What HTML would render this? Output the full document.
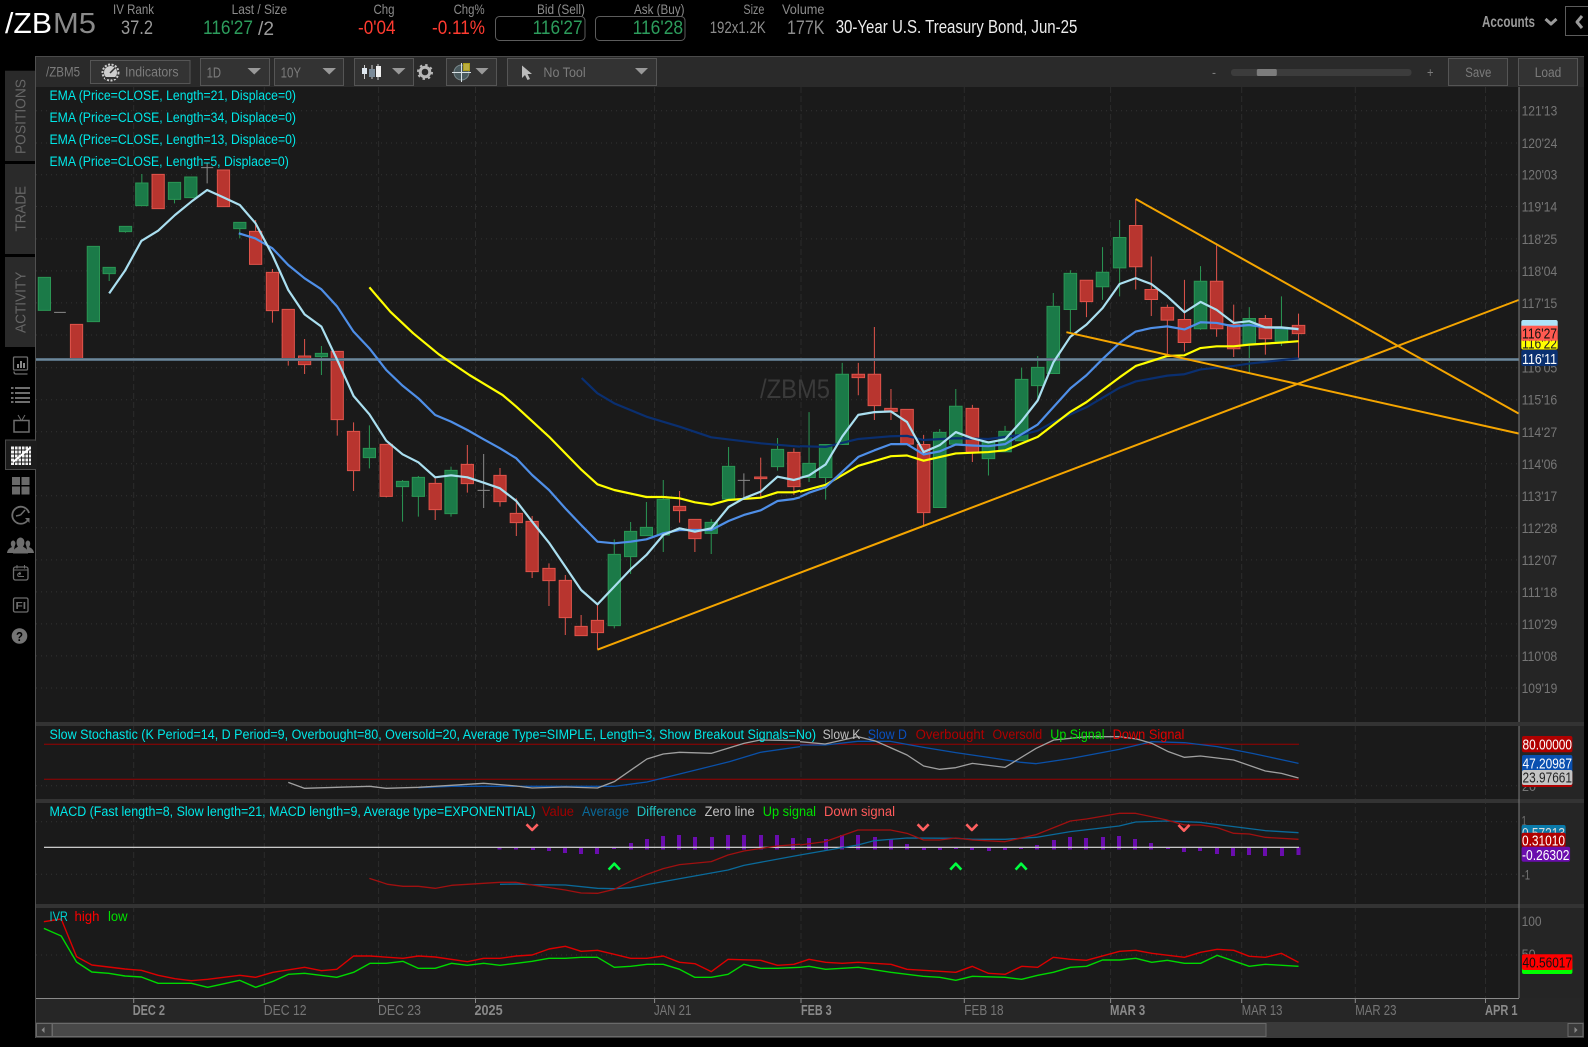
<!DOCTYPE html>
<html><head><meta charset="utf-8"><title>/ZBM5</title>
<style>
html,body{margin:0;padding:0;background:#000;width:1588px;height:1047px;overflow:hidden}
svg{display:block}
text{font-family:"Liberation Sans",sans-serif;white-space:pre}
path,polyline,line{vector-effect:non-scaling-stroke}
.l{fill:none;stroke-linejoin:round}
.rb{fill:#b8352f;stroke:#e0544b;stroke-width:1}
.gb{fill:#1b7a48;stroke:#2a9654;stroke-width:1}
.rw{fill:none;stroke:#e0544b;stroke-width:1}
.gw{fill:none;stroke:#2a9654;stroke-width:1}
.dw{fill:none;stroke:#8a8a8a;stroke-width:1}
.hd{font-size:14px;fill:#8c8c8c}
.big{font-size:19.5px}
.ax{font-size:14px;fill:#767676}
.tb{font-size:13.5px;fill:#7c7c7c}
.em{font-size:13.5px;fill:#00e8e8}
.tm{font-size:14.5px;fill:#767676}
.tmb{font-size:14.5px;fill:#8a8a8a;font-weight:bold}
.btn{fill:#333;stroke:#555;stroke-width:1}
.tri{fill:#999}
.val{font-size:14.5px}
.tab{font-size:15px;fill:#666}
</style></head>
<body>
<svg width="1588" height="1047" viewBox="0 0 1588 1047" xmlns="http://www.w3.org/2000/svg">
<rect width="1588" height="1047" fill="#000"/>

<!-- header -->
<text x="5" y="33" font-size="29" fill="#fff" textLength="47" lengthAdjust="spacingAndGlyphs">/ZB</text>
<text x="53" y="33" font-size="29" fill="#8a8a8a" textLength="43" lengthAdjust="spacingAndGlyphs">M5</text>
<text class="hd" x="113" y="14" textLength="41" lengthAdjust="spacingAndGlyphs">IV Rank</text>
<text class="big" x="121" y="34" fill="#9a9a9a" textLength="32" lengthAdjust="spacingAndGlyphs">37.2</text>
<text class="hd" x="231.6" y="14" textLength="55.5" lengthAdjust="spacingAndGlyphs">Last / Size</text>
<text class="big" x="203" y="34" fill="#2c9c5c" textLength="50" lengthAdjust="spacingAndGlyphs">116'27</text>
<text class="big" x="258" y="35" fill="#9a9a9a" textLength="16" lengthAdjust="spacingAndGlyphs">/2</text>
<text class="hd" x="373.5" y="14" textLength="21" lengthAdjust="spacingAndGlyphs">Chg</text>
<text class="big" x="358" y="34" fill="#ff3b30" textLength="37.5" lengthAdjust="spacingAndGlyphs">-0'04</text>
<text class="hd" x="453.6" y="14" textLength="31" lengthAdjust="spacingAndGlyphs">Chg%</text>
<text class="big" x="432" y="34" fill="#ff3b30" textLength="53" lengthAdjust="spacingAndGlyphs">-0.11%</text>
<text class="hd" x="537" y="14" textLength="48" lengthAdjust="spacingAndGlyphs">Bid (Sell)</text>
<rect x="495.5" y="16.5" width="89.5" height="24" rx="4" fill="none" stroke="#5c5c5c"/>
<text class="big" x="532.6" y="34" fill="#2c9c5c" textLength="50" lengthAdjust="spacingAndGlyphs">116'27</text>
<text class="hd" x="634" y="14" textLength="50.5" lengthAdjust="spacingAndGlyphs">Ask (Buy)</text>
<rect x="595.5" y="16.5" width="89.5" height="24" rx="4" fill="none" stroke="#5c5c5c"/>
<text class="big" x="632.6" y="34" fill="#2c9c5c" textLength="50.5" lengthAdjust="spacingAndGlyphs">116'28</text>
<text class="hd" x="743.4" y="14" textLength="21" lengthAdjust="spacingAndGlyphs">Size</text>
<text x="709.7" y="33" font-size="16.5" fill="#8c8c8c" textLength="56" lengthAdjust="spacingAndGlyphs">192x1.2K</text>
<text class="hd" x="782" y="14" textLength="42.5" lengthAdjust="spacingAndGlyphs">Volume</text>
<text class="big" x="787" y="34" fill="#8c8c8c" textLength="37.5" lengthAdjust="spacingAndGlyphs">177K</text>
<text x="835.7" y="33" font-size="18.5" fill="#ececec" textLength="241.7" lengthAdjust="spacingAndGlyphs">30-Year U.S. Treasury Bond, Jun-25</text>
<text x="1482" y="27" font-size="15.5" font-weight="bold" fill="#9a9a9a" textLength="53" lengthAdjust="spacingAndGlyphs">Accounts</text>
<polyline class="l" points="1545.5,19 1551,24 1556.5,19" stroke="#9a9a9a" stroke-width="3"/>
<path d="M1588 6.5H1565.5V35.5H1588" fill="none" stroke="#5c5c5c"/>
<polyline class="l" points="1582,16 1577,22 1582,28" stroke="#9a9a9a" stroke-width="3"/>

<!-- panel bg -->
<rect x="36" y="56" width="1548" height="982" fill="#2a2a2a"/>
<rect x="36" y="56" width="1548" height="1" fill="#4a4a4a"/>
<rect x="36" y="87" width="1483" height="911" fill="#1a1a1a"/>
<rect x="1519" y="87" width="65" height="911" fill="#252525"/>
<rect x="35" y="56" width="1" height="982" fill="#505050"/>

<!-- grid verticals -->
<path d="M133.7 87V998M264.3 87V998M378.6 87V998M475.5 87V998M654.6 87V998M801 87V998M964.3 87V998M1110.6 87V998M1241.7 87V998M1355.3 87V998M1485.5 87V998" fill="none" stroke="#2b2b2b" stroke-dasharray="6 3"/>
<!-- grid horizontals -->
<path d="M36 110.7H1519M36 143H1519M36 174.7H1519M36 206.5H1519M36 238.9H1519M36 270.9H1519M36 302.9H1519M36 335H1519M36 367.7H1519M36 399.7H1519M36 431.8H1519M36 463.8H1519M36 495.8H1519M36 527.8H1519M36 559.9H1519M36 591.9H1519M36 623.9H1519M36 655.9H1519M36 688H1519M36 785.7H1519M36 821.7H1519M36 874.3H1519M36 955H1519" fill="none" stroke="#333" stroke-dasharray="1 4"/>

<!-- candles left -->
<g transform="translate(0,200) scale(.5102,.33333)">
<path class="rw" d="M501 60V193M534 207V368M565 328V497M597 417V522M661 454V707M693 667V873M757 733V892M853 835V960M916 735V878M980 804V920M1012 895V1008M1043 948V1134M1076 1090V1218M1108 1125V1305M1139 1245V1307M1171 1215V1348M1332 873V968M1362 958V1056M1491 773V890M1556 745V885"/>
<path class="gw" d="M214 202V243M246 79V98M278 -78V17M342 -53V10M470 67V115M630 438V525M724 676V805M789 840V965M820 828V950M884 800V950M1204 1018V1285M1236 966V1122M1267 906V1007M1300 840V1056M1394 957V1062M1428 741V897M1524 714V812"/>
<path class="dw" d="M106 337H129M406 -110V-50M394 -97H418M948 762V924M936 871H960M1458 820V895M1446 841H1470"/>
<path class="rb" d="M138 373h24v106h-24zM298 -77h24v103h-24zM426 -90h24v110h-24zM489 94h24v99h-24zM522 217h24v115h-24zM553 328h24v153h-24zM585 468h24v26h-24zM649 454h24v205h-24zM681 694h24v118h-24zM745 733h24v156h-24zM841 850h24v79h-24zM904 793h24v58h-24zM968 826h24v79h-24zM1000 940h24v28h-24zM1031 964h24v151h-24zM1064 1105h24v37h-24zM1096 1141h24v112h-24zM1127 1279h24v28h-24zM1159 1261h24v37h-24zM1320 919h24v13h-24zM1350 958h24v58h-24zM1479 831h24v5h-24zM1544 757h24v103h-24z"/>
<path class="gb" d="M75 232h24v99h-24zM171 139h24v226h-24zM202 202h24v19h-24zM234 79h24v16h-24zM266 -51h24v68h-24zM330 -53h24v51h-24zM362 -69h24v62h-24zM458 67h24v19h-24zM618 460h24v10h-24zM712 745h24v28h-24zM777 844h24v16h-24zM808 832h24v57h-24zM872 811h24v130h-24zM1192 1063h24v214h-24zM1224 994h24v76h-24zM1255 982h24v25h-24zM1288 898h24v107h-24zM1382 967h24v33h-24zM1416 799h24v98h-24zM1512 748h24v52h-24z"/>
</g>
<!-- candles right -->
<g transform="translate(800,180) scale(.50255,.34438)">
<path class="rw" d="M116 531V625M148 427V697M181 607V697M213 666V767M246 740V1003M343 653V819M570 291V398M668 55V318M699 222V395M731 362V510M765 290V498M829 190V455M863 362V514M926 392V507M992 388V520"/>
<path class="gw" d="M18 674V877M51 768V928M84 531V768M278 723V951M310 607V767M375 760V858M408 714V789M441 545V757M473 511V640M504 328V562M538 262V445M602 195V348M636 116V338M797 250V435M894 369V560M958 338V482"/>
<path class="rb" d="M103.5 564h25v10h-25zM135.5 564h25v91h-25zM168.5 663h25v9h-25zM200.5 666h25v101h-25zM233.5 768h25v198h-25zM330.5 663h25v127h-25zM557.5 291h25v62h-25zM655.5 132h25v120h-25zM686.5 318h25v29h-25zM718.5 370h25v37h-25zM752.5 405h25v67h-25zM816.5 294h25v138h-25zM850.5 420h25v70h-25zM913.5 402h25v59h-25zM979.5 422h25v24h-25z"/>
<path class="gb" d="M5.5 823h25v41h-25zM38.5 768h25v96h-25zM71.5 564h25v204h-25zM265.5 733h25v218h-25zM297.5 657h25v110h-25zM362.5 760h25v49h-25zM395.5 730h25v59h-25zM428.5 579h25v178h-25zM460.5 544h25v53h-25zM491.5 367h25v195h-25zM525.5 271h25v105h-25zM589.5 268h25v42h-25zM623.5 167h25v88h-25zM784.5 294h25v138h-25zM881.5 402h25v75h-25zM945.5 430h25v38h-25z"/>
</g>

<!-- support line -->
<rect x="36" y="358" width="1483" height="3" fill="#566e80"/>
<rect x="36" y="359" width="1483" height="1" fill="#6f8899"/>

<!-- watermark -->
<text x="760" y="398" font-size="27" fill="#3a3a3a" textLength="70" lengthAdjust="spacingAndGlyphs">/ZBM5</text>

<!-- EMAs left -->
<g transform="translate(0,200) scale(.5102,.33333)" stroke-width="2.2">
<polyline class="l" stroke="#0a2f70" points="1140,534 1171,580 1204,610 1267,650 1332,680 1394,712 1491,730 1568,740"/>
<polyline class="l" stroke="#ffff00" points="724,262 765,335 810,400 860,463 920,525 985,585 1012,620 1076,710 1140,810 1171,853 1204,870 1267,891 1300,891 1332,895 1362,907 1394,914 1428,900 1491,893 1524,877 1556,877 1568,872"/>
<polyline class="l" stroke="#4f8fe8" points="468,100 500,115 534,145 565,195 597,235 630,268 661,320 693,395 724,445 757,510 789,557 820,595 853,645 884,665 916,690 948,718 980,745 1012,775 1043,825 1076,870 1108,925 1139,975 1171,1025 1204,1030 1236,1025 1267,1018 1300,1000 1332,990 1362,990 1394,990 1428,963 1458,945 1491,931 1524,903 1556,897 1568,892"/>
<polyline class="l" stroke="#aadff0" points="214,280 245,212 277,123 310,92 343,45 375,5 406,-30 438,-8 470,15 501,70 534,165 565,270 597,343 630,380 661,480 693,588 724,643 757,722 789,763 820,787 853,832 884,826 916,832 948,848 980,865 1012,903 1043,965 1076,1028 1108,1100 1139,1170 1171,1213 1204,1160 1236,1108 1267,1065 1300,1005 1332,985 1362,995 1394,985 1428,921 1458,895 1491,875 1524,830 1556,840 1568,835"/>
</g>
<!-- EMAs right -->
<g transform="translate(800,180) scale(.50255,.34438)" stroke-width="2.2">
<polyline class="l" stroke="#0a2f70" points="0,773 51,775 116,752 181,744 213,743 246,755 310,750 375,752 441,740 473,728 504,703 570,660 636,603 668,585 731,568 765,564 797,550 863,540 894,533 958,523 992,518"/>
<polyline class="l" stroke="#ffff00" points="0,905 51,885 116,830 181,802 213,800 246,815 310,794 375,790 408,785 473,746 538,673 570,645 636,573 668,540 731,511 765,509 797,488 829,483 863,483 894,478 958,472 992,468"/>
<polyline class="l" stroke="#4f8fe8" points="0,920 18,908 51,892 116,804 148,785 181,767 213,767 246,797 278,788 310,768 343,771 375,773 408,767 441,738 473,710 504,660 538,605 570,567 602,520 636,473 668,440 699,430 731,425 765,434 797,413 829,415 863,425 894,421 926,428 958,430 992,433"/>
<polyline class="l" stroke="#aadff0" points="0,865 18,858 51,826 84,745 116,682 148,674 181,672 213,703 246,790 278,770 310,732 343,750 375,762 408,753 441,700 473,640 504,530 538,455 570,420 602,372 636,302 668,285 699,302 731,338 765,384 797,354 829,377 863,415 894,410 926,428 958,428 992,433"/>
</g>

<!-- trend lines -->
<path d="M597.4 649.7L1518.6 300M1135.7 199L1518.6 413.5M1066.4 332.2L1518.6 433.5" fill="none" stroke="#f5a500" stroke-width="2"/>

<!-- EMA labels -->
<text class="em" x="49.5" y="100" textLength="246.5" lengthAdjust="spacingAndGlyphs">EMA (Price=CLOSE, Length=21, Displace=0)</text>
<text class="em" x="49.5" y="122" textLength="246.5" lengthAdjust="spacingAndGlyphs">EMA (Price=CLOSE, Length=34, Displace=0)</text>
<text class="em" x="49.5" y="144" textLength="246.5" lengthAdjust="spacingAndGlyphs">EMA (Price=CLOSE, Length=13, Displace=0)</text>
<text class="em" x="49.5" y="166" textLength="239.3" lengthAdjust="spacingAndGlyphs">EMA (Price=CLOSE, Length=5, Displace=0)</text>

<!-- price axis -->
<rect x="1518.5" y="87" width="1" height="911" fill="#7a7a7a"/>
<g>
<text class="ax" x="1521.6" y="115.5" textLength="35.7" lengthAdjust="spacingAndGlyphs">121'13</text>
<text class="ax" x="1521.6" y="148" textLength="35.7" lengthAdjust="spacingAndGlyphs">120'24</text>
<text class="ax" x="1521.6" y="179.5" textLength="35.7" lengthAdjust="spacingAndGlyphs">120'03</text>
<text class="ax" x="1521.6" y="211.5" textLength="35.7" lengthAdjust="spacingAndGlyphs">119'14</text>
<text class="ax" x="1521.6" y="243.9" textLength="35.7" lengthAdjust="spacingAndGlyphs">118'25</text>
<text class="ax" x="1521.6" y="275.9" textLength="35.7" lengthAdjust="spacingAndGlyphs">118'04</text>
<text class="ax" x="1521.6" y="307.9" textLength="35.7" lengthAdjust="spacingAndGlyphs">117'15</text>
<text class="ax" x="1521.6" y="372.7" textLength="35.7" lengthAdjust="spacingAndGlyphs">116'05</text>
<text class="ax" x="1521.6" y="404.7" textLength="35.7" lengthAdjust="spacingAndGlyphs">115'16</text>
<text class="ax" x="1521.6" y="436.8" textLength="35.7" lengthAdjust="spacingAndGlyphs">114'27</text>
<text class="ax" x="1521.6" y="468.8" textLength="35.7" lengthAdjust="spacingAndGlyphs">114'06</text>
<text class="ax" x="1521.6" y="500.8" textLength="35.7" lengthAdjust="spacingAndGlyphs">113'17</text>
<text class="ax" x="1521.6" y="532.8" textLength="35.7" lengthAdjust="spacingAndGlyphs">112'28</text>
<text class="ax" x="1521.6" y="564.9" textLength="35.7" lengthAdjust="spacingAndGlyphs">112'07</text>
<text class="ax" x="1521.6" y="596.9" textLength="35.7" lengthAdjust="spacingAndGlyphs">111'18</text>
<text class="ax" x="1521.6" y="628.9" textLength="35.7" lengthAdjust="spacingAndGlyphs">110'29</text>
<text class="ax" x="1521.6" y="660.9" textLength="35.7" lengthAdjust="spacingAndGlyphs">110'08</text>
<text class="ax" x="1521.6" y="693" textLength="35.7" lengthAdjust="spacingAndGlyphs">109'19</text>
</g>
<!-- price bubbles -->
<rect x="1521.3" y="320" width="36.4" height="12" rx="2" fill="#aee2f8"/>
<rect x="1521.3" y="338" width="36.4" height="11.5" rx="2" fill="#ffff00"/>
<text class="val" x="1522" y="348.5" fill="#222" textLength="35" lengthAdjust="spacingAndGlyphs">116'22</text>
<rect x="1521.3" y="325.7" width="36.4" height="15" fill="#ff5a50"/>
<text class="val" x="1522" y="338.5" fill="#111" textLength="35" lengthAdjust="spacingAndGlyphs">116'27</text>
<rect x="1521.3" y="350" width="36.4" height="16" rx="2" fill="#0a3070"/>
<text class="val" x="1522" y="364" fill="#fff" textLength="35" lengthAdjust="spacingAndGlyphs">116'11</text>

<!-- pane separators -->
<rect x="36" y="722" width="1548" height="4" fill="#333"/>
<rect x="36" y="799" width="1548" height="4" fill="#333"/>
<rect x="36" y="904" width="1548" height="4" fill="#333"/>
<rect x="1518.5" y="726" width="1" height="272" fill="#7a7a7a"/>

<!-- stochastic -->
<path d="M44 744.3H1299M44 779.3H1299" fill="none" stroke="#990000"/>
<g transform="translate(0,720) scale(.5102,.33333)" stroke-width="1.3">
<polyline class="l" stroke="#0a50a8" points="820,203 885,199 1012,199 1171,199 1204,199 1268,186 1332,162 1430,125 1490,97 1568,80"/>
<polyline class="l" stroke="#a0a0a0" points="565,187 597,205 660,202 725,199 757,205 820,202 885,196 948,190 1012,198 1043,204 1108,201 1171,204 1204,185 1268,117 1300,102 1332,97 1394,100 1458,70 1490,60 1568,62"/>
</g>
<g transform="translate(800,720) scale(.50255,.33333)" stroke-width="1.3">
<polyline class="l" stroke="#0a50a8" points="0,75 50,75 115,64 180,64 246,82 310,98 375,112 440,127 470,131 540,115 635,88 700,65 765,68 830,80 900,100 992,130"/>
<polyline class="l" stroke="#a0a0a0" points="0,65 50,72 115,50 150,63 213,105 246,138 278,148 310,143 343,130 408,142 470,85 505,60 570,50 635,50 670,57 700,70 733,95 765,112 797,108 863,120 926,153 958,160 992,174"/>
</g>
<text class="em" x="49.5" y="739" textLength="766.5" lengthAdjust="spacingAndGlyphs">Slow Stochastic (K Period=14, D Period=9, Overbought=80, Oversold=20, Average Type=SIMPLE, Length=3, Show Breakout Signals=No)</text>
<text class="em" x="822.6" y="739" style="fill:#c0c0c0" textLength="37.7" lengthAdjust="spacingAndGlyphs">Slow K</text>
<text class="em" x="867.8" y="739" style="fill:#0a50c0" textLength="39.2" lengthAdjust="spacingAndGlyphs">Slow D</text>
<text class="em" x="915.6" y="739" style="fill:#b00000" textLength="68.8" lengthAdjust="spacingAndGlyphs">Overbought</text>
<text class="em" x="992.5" y="739" style="fill:#b00000" textLength="49.7" lengthAdjust="spacingAndGlyphs">Oversold</text>
<text class="em" x="1050.3" y="739" style="fill:#00e000" textLength="54.2" lengthAdjust="spacingAndGlyphs">Up Signal</text>
<text class="em" x="1112.6" y="739" style="fill:#e00000" textLength="71.8" lengthAdjust="spacingAndGlyphs">Down Signal</text>
<text class="ax" x="1522" y="746" textLength="14" lengthAdjust="spacingAndGlyphs">80</text>
<text class="ax" x="1522" y="791" textLength="14" lengthAdjust="spacingAndGlyphs">20</text>
<rect x="1522" y="736" width="50.4" height="16.3" rx="2" fill="#b00000"/>
<text class="val" x="1522.5" y="749.5" fill="#fff" textLength="49.5" lengthAdjust="spacingAndGlyphs">80.00000</text>
<rect x="1522" y="755" width="50.4" height="17" rx="2" fill="#0a50b0"/>
<text class="val" x="1522.5" y="768.5" fill="#fff" textLength="49.5" lengthAdjust="spacingAndGlyphs">47.20987</text>
<rect x="1522" y="772" width="50.4" height="15" rx="2" fill="#b00000"/>
<rect x="1522" y="770" width="50.4" height="15" rx="2" fill="#c4c4c4"/>
<text class="val" x="1522.5" y="782.5" fill="#222" textLength="49.5" lengthAdjust="spacingAndGlyphs">23.97661</text>

<!-- MACD -->
<path fill="none" stroke="#6a0dad" stroke-width="4" d="M499.5 847v2.5M516 847v2.5M533 847v3M549 847v4M565 847v6M581 847v7M597 847v7M614 847v2M631 843v6.5M647 839v10.5M663 836v13.5M679 835v14.5M695 837v12.5M712 837v12.5M728 835v14.5M744 835v14.5M761 835v14.5M777 835v14.5M793 838v11.5M809 838v11.5M826 839v10.5M842 835v14.5M858 835v14.5M875 837v12.5M891 839v10.5M907 844v5.5M924 847v3M940 847v3M956 847v2M972 847v3M989 847v4M1005 847v3M1021 847v2M1037 845v4.5M1054 840v9.5M1070 837v12.5M1086 838v11.5M1103 837v12.5M1119 836v13.5M1135 839v10.5M1151 843v6.5M1168 847v2M1184 847v5M1200 847v4M1217 847v7M1233 847v9M1249 847v8M1265 847v9M1282 847v9M1298.5 847v8"/>
<rect x="44" y="846.7" width="1255" height="1.3" fill="#c8c8c8"/>
<g transform="translate(0,720) scale(.5102,.33333)" stroke-width="1.3">
<polyline class="l" stroke="#0a6a9a" points="980,493 1012,492 1043,494 1108,495 1171,505 1204,506 1236,503 1300,485 1427,450 1458,436 1568,405"/>
<polyline class="l" stroke="#a01010" points="724,475 760,493 790,499 820,499 853,505 885,496 948,490 980,487 1012,487 1043,495 1108,510 1139,519 1171,520 1204,508 1236,484 1268,463 1300,446 1332,434 1394,425 1427,405 1458,393 1523,378 1568,373"/>
<polyline class="l" stroke="#ff6060" stroke-width="2.6" points="1032,313 1043,330 1054,313"/>
<polyline class="l" stroke="#00ff40" stroke-width="2.6" points="1193,449 1204,431 1215,449"/>
</g>
<g transform="translate(800,720) scale(.50255,.33333)" stroke-width="1.3">
<polyline class="l" stroke="#0a6a9a" points="0,405 50,392 115,375 148,362 213,354 310,355 343,358 408,358 470,352 538,335 635,318 668,306 730,303 797,307 863,320 926,332 992,338"/>
<polyline class="l" stroke="#a01010" points="0,375 50,365 115,330 180,330 213,340 246,360 278,360 310,354 343,360 408,365 470,344 538,303 570,297 635,280 668,280 730,300 765,315 797,315 830,323 863,340 894,342 926,352 992,358"/>
<g stroke-width="2.6">
<polyline class="l" stroke="#ff6060" points="234,313 245,330 256,313"/>
<polyline class="l" stroke="#ff6060" points="331,313 342,330 353,313"/>
<polyline class="l" stroke="#ff6060" points="753,315 764,332 775,315"/>
<polyline class="l" stroke="#00ff40" points="299,449 310,431 321,449"/>
<polyline class="l" stroke="#00ff40" points="429,449 440,431 451,449"/>
</g>
</g>
<text class="em" x="49.5" y="816" textLength="486" lengthAdjust="spacingAndGlyphs">MACD (Fast length=8, Slow length=21, MACD length=9, Average type=EXPONENTIAL)</text>
<text class="em" x="541.8" y="816" style="fill:#a00000" textLength="32.2" lengthAdjust="spacingAndGlyphs">Value</text>
<text class="em" x="582" y="816" style="fill:#0a6a9a" textLength="47" lengthAdjust="spacingAndGlyphs">Average</text>
<text class="em" x="636.7" y="816" style="fill:#20c0c0" textLength="59.7" lengthAdjust="spacingAndGlyphs">Difference</text>
<text class="em" x="704.6" y="816" style="fill:#c0c0c0" textLength="50" lengthAdjust="spacingAndGlyphs">Zero line</text>
<text class="em" x="762.8" y="816" style="fill:#00e000" textLength="53.2" lengthAdjust="spacingAndGlyphs">Up signal</text>
<text class="em" x="824" y="816" style="fill:#ff5a5a" textLength="71" lengthAdjust="spacingAndGlyphs">Down signal</text>
<text class="ax" x="1521.6" y="825.5" textLength="5" lengthAdjust="spacingAndGlyphs">1</text>
<text class="ax" x="1521.6" y="879.5" textLength="8.5" lengthAdjust="spacingAndGlyphs">-1</text>
<rect x="1521.6" y="825" width="44" height="14" rx="2" fill="#0a7aaa"/>
<text class="val" x="1522" y="838" fill="#ddd" textLength="43" lengthAdjust="spacingAndGlyphs">0.57213</text>
<rect x="1521.6" y="832.7" width="44" height="14.6" rx="2" fill="#b00000"/>
<text class="val" x="1522" y="845.5" fill="#fff" textLength="43" lengthAdjust="spacingAndGlyphs">0.31010</text>
<rect x="1521.6" y="846.7" width="48.5" height="15" rx="2" fill="#6a0dad"/>
<text class="val" x="1522" y="860" fill="#fff" textLength="47.5" lengthAdjust="spacingAndGlyphs">-0.26302</text>

<!-- IVR -->
<g transform="translate(0,720) scale(.5102,.33333)" stroke-width="1.4">
<polyline class="l" stroke="#00d800" points="86,625 120,648 150,726 180,756 213,760 245,768 277,771 310,790 375,790 407,802 470,781 501,802 535,784 565,763 597,760 660,772 693,757 725,730 757,730 790,724 820,745 853,745 885,730 916,736 948,730 980,736 1012,730 1043,724 1076,715 1108,715 1139,712 1171,712 1204,742 1236,739 1268,733 1300,733 1332,748 1362,772 1394,772 1427,763 1458,733 1491,745 1524,745 1568,742"/>
<polyline class="l" stroke="#dc0000" points="86,605 120,597 150,710 180,735 245,747 277,751 310,766 343,776 375,782 407,778 470,766 501,772 535,757 597,742 630,752 660,748 693,708 725,708 790,715 820,708 853,711 916,725 948,715 980,715 1012,708 1043,705 1076,687 1108,679 1139,694 1171,691 1204,703 1236,715 1268,715 1300,708 1332,727 1362,731 1394,755 1427,718 1491,721 1524,736 1556,733 1568,727"/>
</g>
<g transform="translate(800,720) scale(.50255,.33333)" stroke-width="1.4">
<polyline class="l" stroke="#00d800" points="0,742 18,739 51,748 116,742 181,757 245,769 278,772 310,781 343,769 408,772 441,778 473,766 504,757 538,742 570,739 602,720 636,720 668,715 700,727 731,721 765,730 797,730 830,706 894,739 926,733 992,739"/>
<polyline class="l" stroke="#dc0000" points="0,727 18,718 51,727 84,730 116,727 181,733 213,748 310,757 343,739 375,760 408,763 441,739 473,742 504,712 538,718 570,721 636,694 668,691 700,700 765,712 797,697 830,688 863,691 894,709 926,712 958,700 992,727"/>
</g>
<text class="em" x="49.5" y="921" style="fill:#00d0d0" textLength="18.4" lengthAdjust="spacingAndGlyphs">IVR</text>
<text class="em" x="74.5" y="921" style="fill:#ff0000" textLength="25" lengthAdjust="spacingAndGlyphs">high</text>
<text class="em" x="108" y="921" style="fill:#00e000" textLength="19.6" lengthAdjust="spacingAndGlyphs">low</text>
<text class="ax" x="1521.6" y="926" textLength="20" lengthAdjust="spacingAndGlyphs">100</text>
<text class="ax" x="1521.6" y="959" textLength="14" lengthAdjust="spacingAndGlyphs">50</text>
<rect x="1522" y="960" width="50.4" height="14" rx="2" fill="#00ff00"/>
<rect x="1522" y="954.3" width="50.4" height="15.7" rx="2" fill="#ff0000"/>
<text class="val" x="1522.5" y="967.5" fill="#111" textLength="49.5" lengthAdjust="spacingAndGlyphs">40.56017</text>

<!-- time axis -->
<rect x="36" y="998" width="1548" height="24" fill="#262626"/>
<rect x="36" y="998" width="1483" height="1" fill="#8a8a8a"/>
<path d="M133.7 999v4M264.3 999v4M378.6 999v4M475.5 999v4M654.6 999v4M801 999v4M964.3 999v4M1110.6 999v4M1241.7 999v4M1355.3 999v4M1485.5 999v4" fill="none" stroke="#8a8a8a"/>
<text class="tmb" x="132.7" y="1015" textLength="32.3" lengthAdjust="spacingAndGlyphs">DEC 2</text>
<text class="tm" x="263.8" y="1015" textLength="42.8" lengthAdjust="spacingAndGlyphs">DEC 12</text>
<text class="tm" x="378" y="1015" textLength="42.9" lengthAdjust="spacingAndGlyphs">DEC 23</text>
<text class="tmb" x="474.5" y="1015" textLength="28.1" lengthAdjust="spacingAndGlyphs">2025</text>
<text class="tm" x="654" y="1015" textLength="37.3" lengthAdjust="spacingAndGlyphs">JAN 21</text>
<text class="tmb" x="801" y="1015" textLength="30.7" lengthAdjust="spacingAndGlyphs">FEB 3</text>
<text class="tm" x="964.3" y="1015" textLength="39.2" lengthAdjust="spacingAndGlyphs">FEB 18</text>
<text class="tmb" x="1110" y="1015" textLength="35.2" lengthAdjust="spacingAndGlyphs">MAR 3</text>
<text class="tm" x="1241.7" y="1015" textLength="40.7" lengthAdjust="spacingAndGlyphs">MAR 13</text>
<text class="tm" x="1355.3" y="1015" textLength="41.2" lengthAdjust="spacingAndGlyphs">MAR 23</text>
<text class="tmb" x="1485" y="1015" textLength="32.6" lengthAdjust="spacingAndGlyphs">APR 1</text>

<!-- scrollbar -->
<rect x="36" y="1022" width="1548" height="16" fill="#3a3a3a"/>
<rect x="36.5" y="1023.5" width="15.5" height="13" fill="#3a3a3a" stroke="#6a6a6a"/>
<path d="M41.5 1030l3-3v6z" fill="#8a8a8a"/>
<rect x="52.5" y="1023.5" width="1213.5" height="13" fill="#484848" stroke="#6a6a6a"/>
<rect x="1568" y="1023.5" width="15" height="13" fill="#3a3a3a" stroke="#6a6a6a"/>
<path d="M1577.5 1030l-3-3v6z" fill="#8a8a8a"/>

<!-- toolbar -->
<text class="tb" x="46" y="76.5" textLength="34" lengthAdjust="spacingAndGlyphs">/ZBM5</text>
<rect class="btn" x="90.5" y="60.5" width="99.5" height="23"/>
<circle cx="110.5" cy="72.5" r="6.5" fill="#cfcfcf"/>
<circle cx="110.5" cy="72.5" r="8" fill="none" stroke="#cfcfcf" stroke-width="2" stroke-dasharray="2 1.5"/>
<path d="M105 78h11" stroke="#333" stroke-width="2"/>
<path d="M110 73l5-5" stroke="#333" stroke-width="1.5"/>
<text class="tb" x="125" y="76.5" textLength="53.6" lengthAdjust="spacingAndGlyphs">Indicators</text>

<rect class="btn" x="200.5" y="58.5" width="69" height="27"/>
<text class="tb" x="206.6" y="77.5" textLength="14.4" lengthAdjust="spacingAndGlyphs" style="font-size:15px">1D</text>
<path class="tri" d="M247.5 68h13.5l-6.75 6.5z"/>
<rect class="btn" x="274.5" y="58.5" width="69" height="27"/>
<text class="tb" x="280.6" y="77.5" textLength="20.4" lengthAdjust="spacingAndGlyphs" style="font-size:15px">10Y</text>
<path class="tri" d="M322.5 68h13.5l-6.75 6.5z"/>

<rect class="btn" x="354.5" y="58.5" width="59" height="27"/>
<path d="M364.5 65v14M372 65v14M378 64v16" stroke="#ccc" fill="none"/>
<rect x="362" y="68" width="5" height="6" fill="#e0e8f0"/>
<rect x="369" y="69" width="6" height="8" fill="#7a8a98"/>
<rect x="376" y="66" width="5" height="11" fill="#f0f0f0"/>
<path class="tri" d="M392 68h13.5l-6.75 6.5z"/>

<circle cx="425" cy="72" r="4.8" fill="none" stroke="#b8b8b8" stroke-width="3"/>
<circle cx="425" cy="72" r="7" fill="none" stroke="#b8b8b8" stroke-width="2" stroke-dasharray="2.4 3.1"/>

<rect class="btn" x="446.5" y="58.5" width="50" height="27"/>
<circle cx="461.5" cy="72.5" r="7.5" fill="#4a5a5e" stroke="#7a8a8e"/>
<path d="M452 72.5H471M461.5 63V82" stroke="#d8e0e4" fill="none"/>
<rect x="463" y="63" width="7" height="8" fill="#a89a1a"/>
<path d="M464 65h5M464 67h5M464 69h5" stroke="#ddd080" stroke-width=".7" fill="none"/>
<path class="tri" d="M475.5 68h13l-6.5 6.5z"/>

<rect class="btn" x="507.5" y="58.5" width="149" height="27"/>
<path d="M522 65.5V78l3-3 2.5 5 2.5-1-2.500-5h4.500z" fill="#bbb"/>
<text class="tb" x="543.4" y="77" textLength="42.3" lengthAdjust="spacingAndGlyphs">No Tool</text>
<path class="tri" d="M635 68h13l-6.5 6.5z"/>

<text class="tb" x="1212" y="77" textLength="4" lengthAdjust="spacingAndGlyphs">-</text>
<rect x="1231" y="69" width="180.5" height="7" rx="3" fill="#3c3c3c"/>
<rect x="1256.8" y="69" width="20" height="7" rx="1.5" fill="#7c7c7c"/>
<text class="tb" x="1427" y="77" textLength="6.5" lengthAdjust="spacingAndGlyphs">+</text>
<rect x="1448.5" y="58.5" width="59" height="27" fill="#333" stroke="#555"/>
<text class="tb" x="1465.3" y="77" textLength="26" lengthAdjust="spacingAndGlyphs">Save</text>
<rect x="1518.5" y="58.5" width="59" height="27" fill="#333" stroke="#555"/>
<text class="tb" x="1534.7" y="77" textLength="26.6" lengthAdjust="spacingAndGlyphs">Load</text>

<!-- sidebar -->
<rect x="5" y="70.7" width="30" height="90.3" fill="#2a2a2a"/>
<rect x="5" y="164" width="30" height="90" fill="#2a2a2a"/>
<rect x="5" y="257" width="30" height="90" fill="#2a2a2a"/>
<text class="tab" transform="translate(25.5,154) rotate(-90)" textLength="75" lengthAdjust="spacingAndGlyphs">POSITIONS</text>
<text class="tab" transform="translate(25.5,231.5) rotate(-90)" textLength="45.5" lengthAdjust="spacingAndGlyphs">TRADE</text>
<text class="tab" transform="translate(25.5,333) rotate(-90)" textLength="61.4" lengthAdjust="spacingAndGlyphs">ACTIVITY</text>

<!-- reports icon -->
<g fill="none" stroke="#6e6e6e" stroke-width="1.3">
<rect x="13.5" y="357" width="14" height="13" rx="1"/>
<path d="M14 371.5c0 2 1 2.5 2 2.5h11.5"/>
</g>
<path d="M17 368v-4h2v4zM20 368v-7h2v7zM23 368v-5h2v5z" fill="#8a8a8a"/>
<!-- list icon -->
<path d="M11 388h2.5M15 388h15M11 393h2.5M15 393h15M11 398h2.5M15 398h15M11 402h2.5M15 402h15" stroke="#6e6e6e" stroke-width="2" fill="none"/>
<!-- tv icon -->
<rect x="14" y="420.5" width="15" height="11.5" fill="none" stroke="#6e6e6e" stroke-width="1.5"/>
<path d="M21 420l-3-5M22 420l3-5" stroke="#6e6e6e" fill="none"/>
<!-- active tab -->
<path d="M35.5 440H5.5V469.5H35.5" fill="#1c1c1c" stroke="#4a4a4a"/>
<rect x="35" y="441" width="2" height="28" fill="#1c1c1c"/>
<rect x="11" y="446.5" width="20" height="18.5" fill="#f0f0f0"/>
<path d="M14.5 446.5V465M18 446.5V465M21.5 446.5V465M25 446.5V465M28.5 446.5V465M11 450H31M11 454H31M11 458H31M11 462H31" stroke="#1c1c1c" stroke-width=".9" fill="none"/>
<path d="M13 462L30 448" stroke="#fff" stroke-width="2" fill="none"/>
<!-- windows -->
<path d="M12 477h8v8h-8zM21.5 477h8v8h-8zM12 486.5h8v8h-8zM21.5 486.5h8v8h-8z" fill="#6a6a6a"/>
<!-- clock -->
<path d="M27.5 520.500A8.5 8.5 0 1 1 29 513" fill="none" stroke="#6e6e6e" stroke-width="1.8"/>
<path d="M20.5 515l4.5-5M16 516l4.5-1" stroke="#6e6e6e" stroke-width="1.5" fill="none"/>
<path d="M25 518h4.5v5z" fill="#6e6e6e"/>
<!-- people -->
<path d="M7 553c.5-4 3-5 5-6-1.500-1.500-2-6 1-6.500 1.500 0 2 1 2.500 2.500 0 2-1 3-1 4l-1 6zM34 553c-.5-4-3-5-5-6 1.500-1.500 2-6-1-6.500-1.500 0-2 1-2.500 2.500 0 2 1 3 1 4l1 6z" fill="#6e6e6e"/>
<path d="M13 553.500c0-5 3.500-5.500 5-7-2-2-2.500-8.500 2.500-9 5 .5 4.500 7 2.500 9 1.500 1.500 5 2 5 7z" fill="#6e6e6e"/>
<!-- calendar -->
<rect x="13.5" y="567" width="14.5" height="13" rx="2" fill="none" stroke="#6e6e6e" stroke-width="1.3"/>
<path d="M17 565v3.5M24.5 565v3.5M14 570h13.5" stroke="#6e6e6e" fill="none"/>
<path d="M24 576.500h-5c-1.500 0-2-3 0-3h2M20.500 572l-2 1.500 2 1.500" stroke="#6e6e6e" fill="none"/>
<!-- FI -->
<rect x="13.5" y="598" width="14.5" height="14" rx="1.5" fill="none" stroke="#6e6e6e" stroke-width="1.3"/>
<text x="15.5" y="609" font-size="10" font-weight="bold" fill="#6e6e6e" textLength="10.5" lengthAdjust="spacingAndGlyphs">FI</text>
<!-- help -->
<circle cx="19.5" cy="636" r="7.8" fill="#747474"/>
<text x="16" y="641" font-size="13" font-weight="bold" fill="#000" textLength="7" lengthAdjust="spacingAndGlyphs">?</text>
</svg>
</body></html>
